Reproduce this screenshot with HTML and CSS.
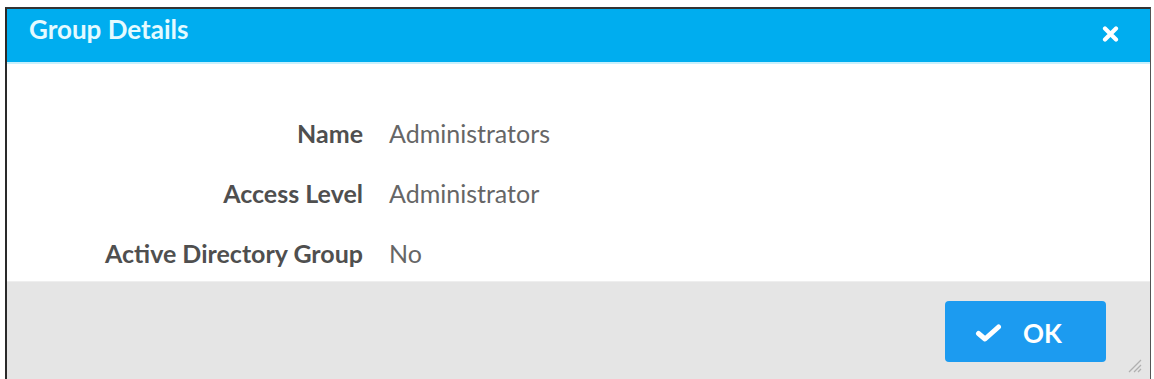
FILE: index.html
```html
<!DOCTYPE html>
<html>
<head>
<meta charset="utf-8">
<link rel="stylesheet" href="styles.css">
</head>
<body>
<div class="dialog">
  <div class="header">
    <div class="title">Group Details</div>
    <div class="close" aria-label="close">
      <svg width="17" height="16" viewBox="0 0 17 16"><path d="M3 2.5 L14 13.5 M14 2.5 L3 13.5" stroke="#ffffff" stroke-width="4.2" stroke-linecap="round"/></svg>
    </div>
  </div>
  <div class="body">
    <div class="grid">
      <div class="label">Name</div><div class="value">Administrators</div>
      <div class="label">Access Level</div><div class="value">Administrator</div>
      <div class="label">Active Directory Group</div><div class="value">No</div>
    </div>
  </div>
  <div class="footer">
    <button class="ok">
      <svg width="27" height="18" viewBox="0 0 27 18"><path d="M3.5 9.5 L10 15 L23.5 3" fill="none" stroke="#ffffff" stroke-width="5" stroke-linecap="round" stroke-linejoin="round"/></svg>
      <span>OK</span>
    </button>
    <div class="grip">
      <svg width="16" height="16" viewBox="0 0 16 16"><path d="M15 3 L3 15 M15 8 L8 15 M15 12 L12 15" stroke="#b0b0b0" stroke-width="1.3"/></svg>
    </div>
  </div>
</div>
</body>
</html>
```
FILE: styles.css
```css
html, body {
  margin: 0;
  padding: 0;
  background: #ffffff;
}
body {
  padding: 7px 3px 0 5px;
  font-family: Lato, "Liberation Sans", sans-serif;
}
.dialog {
  border-top: 2px solid #333;
  border-left: 2px solid #2a2a2a;
  border-right: 1px solid #555;
  height: 372px;
  display: flex;
  flex-direction: column;
  box-sizing: border-box;
}
.header {
  background: #00adef;
  height: 53px;
  border-bottom: 2px solid #c8f0fc;
  display: flex;
  align-items: flex-start;
  justify-content: space-between;
  padding: 0 31px 0 22px;
  flex: none;
}
.title {
  color: #e4faff;
  font-weight: bold;
  font-size: 26px;
  line-height: 30px;
  padding-top: 5px;
}
.close {
  padding-top: 17px;
  width: 17px;
  height: 16px;
}
.body {
  background: #ffffff;
  flex: none;
  height: 217px;
  box-sizing: border-box;
  padding-top: 54px;
}
.grid {
  display: grid;
  grid-template-columns: 356px auto;
  column-gap: 26px;
  row-gap: 30px;
  font-size: 25px;
  line-height: 30px;
}
.label {
  text-align: right;
  color: #4f4f4f;
  font-weight: bold;
}
.value {
  color: #666666;
}
.footer {
  flex: 1;
  background: #e5e5e5;
  border-top: 1px solid #eeeeee;
  display: flex;
  align-items: flex-start;
  justify-content: flex-end;
  padding-top: 19px;
  padding-right: 12px;
  position: relative;
}
.ok {
  width: 161px;
  height: 61px;
  background: #1c9bf0;
  border: none;
  border-radius: 4px;
  color: #ffffff;
  font-family: Lato, "Liberation Sans", sans-serif;
  font-weight: bold;
  font-size: 26px;
  display: flex;
  align-items: center;
  justify-content: center;
  gap: 21px;
  padding: 2px 14px 0 0;
  margin-right: 32px;
}
.grip {
  position: absolute;
  right: 8px;
  bottom: 6px;
  width: 16px;
  height: 16px;
}
```
